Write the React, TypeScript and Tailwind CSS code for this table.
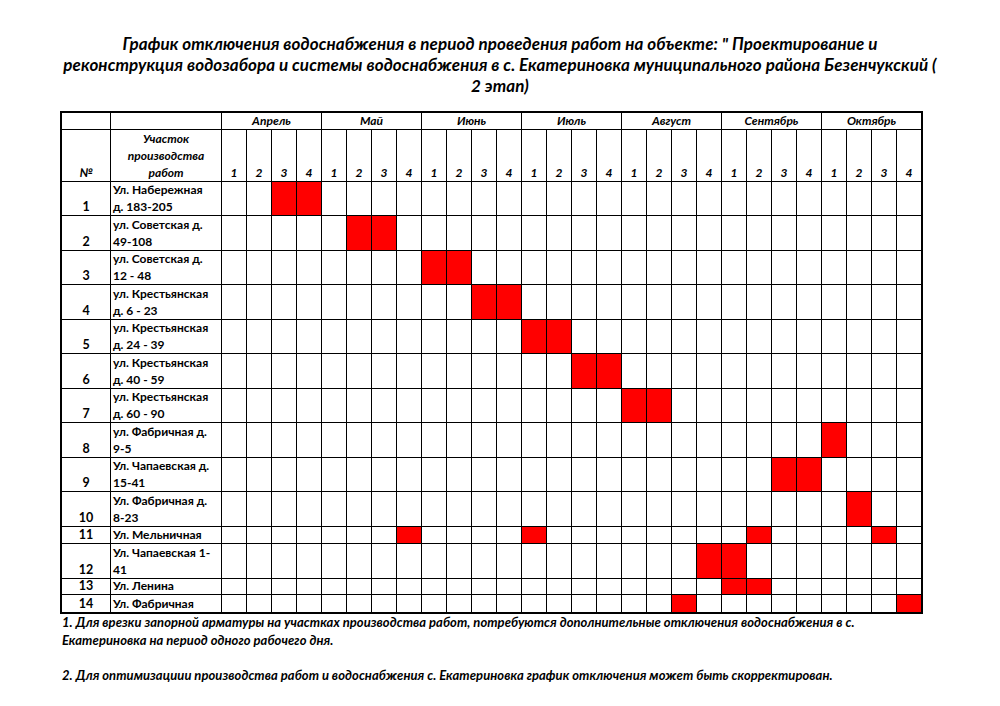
import React from "react";

const months = ["Апрель", "Май", "Июнь", "Июль", "Август", "Сентябрь", "Октябрь"];

type Row = { n: string; lines: string[]; red: number[] };

const rows: Row[] = [
  { n: "1", lines: ["Ул. Набережная", "д. 183-205"], red: [3, 4] },
  { n: "2", lines: ["ул. Советская д.", "49-108"], red: [6, 7] },
  { n: "3", lines: ["ул. Советская д.", "12 - 48"], red: [9, 10] },
  { n: "4", lines: ["ул. Крестьянская", "д. 6 - 23"], red: [11, 12] },
  { n: "5", lines: ["ул. Крестьянская", "д. 24 - 39"], red: [13, 14] },
  { n: "6", lines: ["ул. Крестьянская", "д. 40 - 59"], red: [15, 16] },
  { n: "7", lines: ["ул. Крестьянская", "д. 60 - 90"], red: [17, 18] },
  { n: "8", lines: ["ул. Фабричная д.", "9-5"], red: [25] },
  { n: "9", lines: ["Ул. Чапаевская д.", "15-41"], red: [23, 24] },
  { n: "10", lines: ["Ул. Фабричная д.", "8-23"], red: [26] },
  { n: "11", lines: ["Ул. Мельничная"], red: [8, 13, 22, 27] },
  { n: "12", lines: ["Ул. Чапаевская 1-", "41"], red: [20, 21] },
  { n: "13", lines: ["Ул. Ленина"], red: [21, 22] },
  { n: "14", lines: ["Ул. Фабричная"], red: [19, 28] },
];

const weeks = Array.from({ length: 28 }, (_, i) => i + 1);

export default function App() {
  return (
    <div className="w-[1000px] h-[706px] bg-white text-black overflow-hidden font-['Lato','Liberation_Sans',sans-serif]">
      <div className="pt-[33px] text-center font-bold italic text-[17px] leading-[21px] tracking-[0.08px] whitespace-nowrap">
        <div>График отключения водоснабжения в период проведения работ на объекте: " Проектирование и</div>
        <div>реконструкция водозабора и системы водоснабжения в с. Екатериновка муниципального района Безенчукский (</div>
        <div>2 этап)</div>
      </div>

      <div className="ml-[60px] mt-[15px] w-[863px] p-[2px] bg-black grid gap-[1px] grid-cols-[48px_110px_repeat(28,24px)] grid-rows-[16px_51px_33px_34px_33px_34px_33px_34px_33px_34px_33px_34px_16px_34px_15px_17px] text-[12px] font-bold">
        {/* month row */}
        <div className="bg-white" />
        <div className="bg-white" />
        {months.map((m) => (
          <div key={m} className="col-span-4 bg-white italic flex items-center justify-center leading-none">
            {m}
          </div>
        ))}
        {/* header row */}
        <div className="bg-white italic flex items-end justify-center leading-[17px]">№</div>
        <div className="bg-white italic flex flex-col items-center justify-end leading-[17px]">
          <span>Участок</span>
          <span>производства</span>
          <span>работ</span>
        </div>
        {weeks.map((w) => (
          <div key={w} className="bg-white italic flex items-end justify-center leading-[17px]">
            {((w - 1) % 4) + 1}
          </div>
        ))}
        {/* data rows */}
        {rows.map((r) => (
          <React.Fragment key={r.n}>
            <div className="bg-white flex items-end justify-center leading-[17px] text-[12.5px]">{r.n}</div>
            <div className="bg-white flex flex-col justify-end pl-[2px] leading-[17px] whitespace-nowrap">
              {r.lines.map((l) => (
                <span key={l}>{l}</span>
              ))}
            </div>
            {weeks.map((w) => (
              <div key={w} className={r.red.includes(w) ? "bg-[#ff0000]" : "bg-white"} />
            ))}
          </React.Fragment>
        ))}
      </div>

      <div className="ml-[62px] font-bold italic text-[13px] leading-[17.5px] tracking-[0.05px] whitespace-nowrap">
        <div>1. Для врезки запорной арматуры на участках производства работ, потребуются дополнительные отключения водоснабжения в с.</div>
        <div>Екатериновка на период одного рабочего дня.</div>
        <div className="h-[17.5px]" />
        <div>2. Для оптимизациии производства работ и водоснабжения с. Екатериновка график отключения может быть скорректирован.</div>
      </div>
    </div>
  );
}
